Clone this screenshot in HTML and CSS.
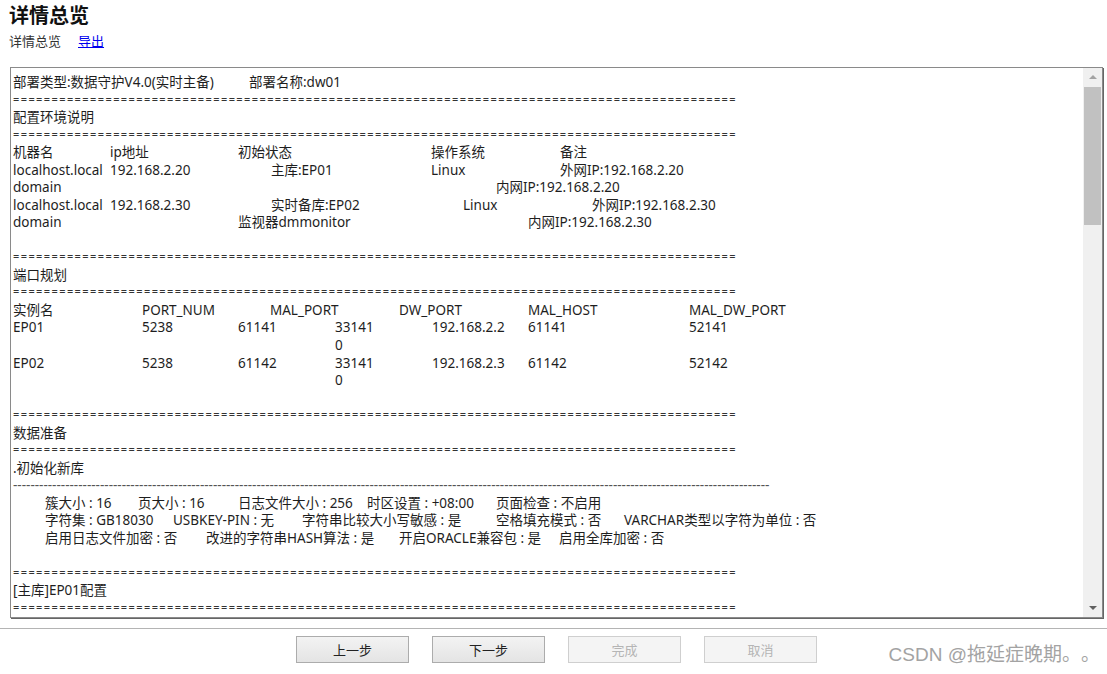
FILE: index.html
```html
<!DOCTYPE html>
<html lang="zh-CN">
<head>
    <meta charset="UTF-8">
    <meta name="viewport" content="width=device-width, initial-scale=1.0">
    <title>详情总览</title>
    <link rel="stylesheet" href="styles.css">
</head>
<body>
    <div class="main">
        <h1>详情总览</h1>
        <div class="sub">详情总览<a href="#">导出</a></div>

        <div class="viewer">
            <div class="text">
                <div class="ln"><span class="w236">部署类型:数据守护V4.0(实时主备)</span>部署名称:dw01</div>
                <div class="ln rule">==============================================================================================</div>
                <div class="ln">配置环境说明</div>
                <div class="ln rule">==============================================================================================</div>
                <div class="ln"><span class="w97">机器名</span><span class="w128">ip地址</span><span class="w193">初始状态</span><span class="w129">操作系统</span>备注</div>
                <div class="ln"><span class="w97">localhost.local</span><span class="w161">192.168.2.20</span><span class="w160">主库:EP01</span><span class="w129">Linux</span>外网IP:192.168.2.20</div>
                <div class="ln"><span class="w483">domain</span>内网IP:192.168.2.20</div>
                <div class="ln"><span class="w97">localhost.local</span><span class="w161">192.168.2.30</span><span class="w192">实时备库:EP02</span><span class="w129">Linux</span>外网IP:192.168.2.30</div>
                <div class="ln"><span class="w225">domain</span><span class="w290">监视器dmmonitor</span>内网IP:192.168.2.30</div>
                <div class="ln">&nbsp;</div>
                <div class="ln rule">==============================================================================================</div>
                <div class="ln">端口规划</div>
                <div class="ln rule">==============================================================================================</div>
                <div class="ln"><span class="w129">实例名</span><span class="w128">PORT_NUM</span><span class="w129">MAL_PORT</span><span class="w129">DW_PORT</span><span class="w161">MAL_HOST</span>MAL_DW_PORT</div>
                <div class="port-row">
                    <span>EP01</span><span>5238</span><span>61141</span><span>33141<br>0</span><span>192.168.2.2</span><span>61141</span><span>52141</span>
                </div>
                <div class="port-row">
                    <span>EP02</span><span>5238</span><span>61142</span><span>33141<br>0</span><span>192.168.2.3</span><span>61142</span><span>52142</span>
                </div>
                <div class="ln">&nbsp;</div>
                <div class="ln rule">==============================================================================================</div>
                <div class="ln">数据准备</div>
                <div class="ln rule">==============================================================================================</div>
                <div class="ln">.初始化新库</div>
                <div class="ln dash">------------------------------------------------------------------------------------------------------------------------------------------------------------------------------</div>
                <div class="ln indent"><span class="w93">簇大小 : 16</span><span class="w100">页大小 : 16</span><span class="w129">日志文件大小 : 256</span><span class="w129">时区设置 : +08:00</span>页面检查 : 不启用</div>
                <div class="ln indent"><span class="w128">字符集 : GB18030</span><span class="w129">USBKEY-PIN : 无</span><span class="w194">字符串比较大小写敏感 : 是</span><span class="w128">空格填充模式 : 否</span>VARCHAR类型以字符为单位 : 否</div>
                <div class="ln indent"><span class="w161">启用日志文件加密 : 否</span><span class="w193">改进的字符串HASH算法 : 是</span><span class="w160">开启ORACLE兼容包 : 是</span>启用全库加密 : 否</div>
                <div class="ln">&nbsp;</div>
                <div class="ln rule">==============================================================================================</div>
                <div class="ln">[主库]EP01配置</div>
                <div class="ln rule">==============================================================================================</div>
                <div class="ln">&nbsp;</div>
            </div>
            <div class="scrollbar">
                <div class="arrow"><span class="tri-up"></span></div>
                <div class="track"><div class="thumb"></div></div>
                <div class="arrow"><span class="tri-down"></span></div>
            </div>
        </div>
    </div>

    <div class="footer">
        <div class="buttons">
            <button>上一步</button>
            <button>下一步</button>
            <button disabled>完成</button>
            <button disabled>取消</button>
        </div>
    </div>

    <div class="watermark">CSDN @拖延症晚期。。</div>
</body>
</html>
```

FILE: styles.css
```css
body {
    margin: 0;
    font-family: "Noto Sans", "Noto Sans CJK SC", sans-serif;
    color: #222;
    background: #fff;
}
.main {
    padding: 0 4px 0 10px;
}
h1 {
    margin: 0 0 0 -1px;
    font-family: "Noto Sans CJK SC", sans-serif;
    font-size: 20px;
    line-height: 30px;
    font-weight: bold;
    color: #111;
}
.sub {
    margin-left: -1px;
    font-family: "Noto Sans CJK SC", sans-serif;
    font-size: 13px;
    line-height: 21px;
    color: #333;
}
.sub a {
    margin-left: 17px;
    color: #0000ee;
}
.viewer {
    margin-top: 16px;
    width: 1093px;
    height: 551px;
    box-sizing: border-box;
    border: 1px solid #8a8a8a;
    box-shadow: 1px 1px 0 #666;
    display: flex;
    overflow: hidden;
}
.text {
    flex: 1;
    overflow: hidden;
    padding: 6px 0 0 2px;
    font-size: 13.5px;
    line-height: 17.53px;
    color: #1e1e1e;
}
.ln {
    white-space: nowrap;
}
.ln span {
    display: inline-block;
}
.rule {
    font-size: 11px;
    letter-spacing: 1.41px;
    line-height: 14.53px;
    padding-bottom: 3px;
    color: #333;
}
.dash {
    color: #555;
}
.indent {
    padding-left: 32px;
}
.w93 { width: 93px; }
.w97 { width: 97px; }
.w100 { width: 100px; }
.w128 { width: 128px; }
.w129 { width: 129px; }
.w160 { width: 160px; }
.w161 { width: 161px; }
.w192 { width: 192px; }
.w193 { width: 193px; }
.w194 { width: 194px; }
.w225 { width: 225px; }
.w236 { width: 236px; }
.w290 { width: 290px; }
.w483 { width: 483px; }
.port-row {
    display: grid;
    grid-template-columns: 129px 96px 97px 97px 96px 161px auto;
    white-space: nowrap;
}
.scrollbar {
    width: 19px;
    background: #f0f0f0;
    display: flex;
    flex-direction: column;
}
.arrow {
    height: 18px;
    display: flex;
    align-items: center;
    justify-content: center;
}
.tri-up {
    border-left: 4px solid transparent;
    border-right: 4px solid transparent;
    border-bottom: 4px solid #a3a3a3;
}
.tri-down {
    border-left: 4px solid transparent;
    border-right: 4px solid transparent;
    border-top: 4px solid #606060;
}
.track {
    flex: 1;
    padding: 1px 1px 0;
}
.thumb {
    height: 138px;
    background: #c1c1c1;
}
.footer {
    margin-top: 10px;
    border-top: 1px solid #b4b4b4;
    padding-top: 7px;
}
.buttons {
    display: flex;
    justify-content: center;
    gap: 23px;
    padding-left: 6px;
}
button {
    width: 113px;
    height: 27px;
    font-family: "Noto Sans CJK SC", sans-serif;
    font-size: 13px;
    color: #222;
    background: linear-gradient(#f3f3f3, #e4e4e4);
    border: 1px solid #acacac;
    border-radius: 0;
    padding: 0;
}
button:disabled {
    color: #b5b5b5;
    background: #f4f4f4;
    border-color: #cfcfcf;
}
.watermark {
    position: absolute;
    right: 7px;
    bottom: 8px;
    font-family: "Liberation Sans", "Noto Sans CJK SC", sans-serif;
    font-size: 19px;
    line-height: 22px;
    color: #a3a3a3;
    text-spacing-trim: space-all;
}
```
